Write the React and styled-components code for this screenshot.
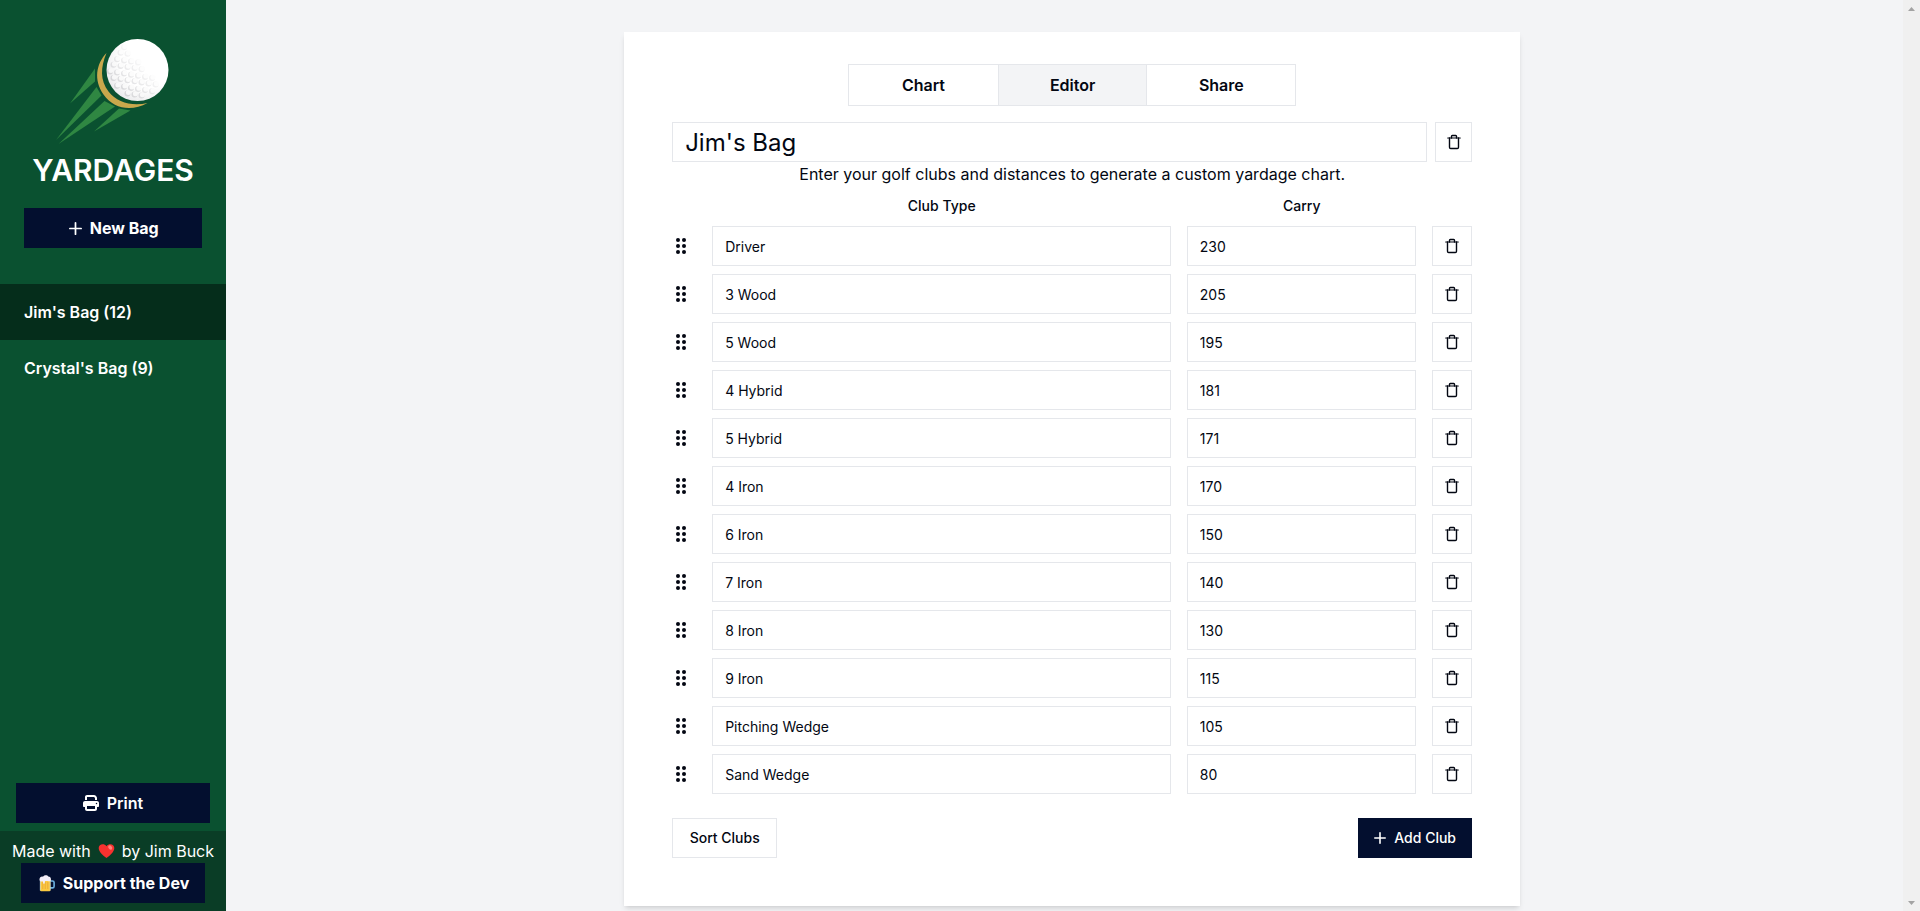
import React from "react";
import styled, { createGlobalStyle } from "styled-components";
import { FaPrint } from "react-icons/fa6";

const Global = createGlobalStyle`
  *, *::before, *::after { box-sizing: border-box; }
  body { margin: 0; font-family: Inter, "Liberation Sans", sans-serif; font-size: 16px; line-height: 24px; color: #030712; background: #f3f4f6; overflow: hidden; }
  button, input { font: inherit; color: inherit; margin: 0; border-radius: 0; }
  svg { display: block; flex: none; }
  h1, p { margin: 0; }
`;

const Page = styled.div`display: flex; height: 911px; overflow: hidden;`;

const Sidebar = styled.aside`
  width: 226px; flex: none; display: flex; flex-direction: column;
  background: #0a5130; color: #fff;
`;
const Logo = styled.svg`width: 130px; height: 120px; margin: 30px 0 0 50px;`;
const Brand = styled.h1`
  margin-top: 2px; text-align: center; font-size: 30px; line-height: 36px; font-weight: 600;
`;
const Button = styled.button`
  display: inline-flex; align-items: center; justify-content: center; gap: 8px; flex: none;
  height: 40px; padding: ${(p) => p.$pad || "0 16px"}; margin: ${(p) => p.$margin || 0};
  width: ${(p) => p.$width || "auto"};
  border: ${(p) => (p.$outline ? "1px solid #e5e7eb" : "0")};
  background: ${(p) => (p.$outline ? "#fff" : "#030f2f")};
  color: ${(p) => (p.$outline ? "#030712" : "#fff")};
  font-size: ${(p) => (p.$large ? 16 : 14)}px;
  font-weight: ${(p) => (p.$bold ? 700 : p.$large ? 600 : 500)};
  white-space: nowrap;
`;
const BagList = styled.nav`margin-top: 36px; flex: 1;`;
const BagItem = styled.div`
  height: 56px; padding: 16px 24px; font-weight: 600;
  background: ${(p) => (p.$active ? "#052d1b" : "transparent")};
`;
const Footer = styled.footer`
  height: 80px; padding-top: 8px; background: #0a3d26;
  display: flex; flex-direction: column; align-items: center;
`;
const Credit = styled.p`
  display: flex; align-items: center; white-space: pre; height: 24px;
  svg { margin: 0 2.5px; }
`;

const Main = styled.main`flex: 1; display: flex; align-items: flex-start; padding: 32px 0 0 398.16px;`;
const Card = styled.section`
  width: 896px; height: 874px; padding: 32px 48px 48px; background: #fff;
  box-shadow: 0 4px 6px -1px rgba(0,0,0,.1), 0 2px 4px -2px rgba(0,0,0,.1);
`;
const Tabs = styled.div`
  width: 448px; height: 42px; margin: 0 auto; display: grid; grid-template-columns: repeat(3, 1fr);
  border: 1px solid #e5e7eb;
`;
const Tab = styled.div`
  display: flex; align-items: center; justify-content: center; font-weight: 600;
  background: ${(p) => (p.$active ? "#f3f4f6" : "#fff")};
  & + & { border-left: 1px solid #e5e7eb; }
`;
const TitleRow = styled.div`display: flex; gap: 8px; margin-top: 16px;`;
const Input = styled.input`
  width: 100%; min-width: 0; height: 40px; padding: 0 12px;
  border: 1px solid #e5e7eb; background: #fff; outline: 0;
  font-size: ${(p) => (p.$title ? 24 : 14)}px;
`;
const Intro = styled.p`text-align: center;`;
const Grid = styled.div`
  display: grid; grid-template-columns: 24px 2fr 1fr 40px; column-gap: 16px; row-gap: 8px; align-items: center;
`;
const Head = styled.div`
  height: 24px; margin-top: 8px; padding-left: 0.5px; font-size: 14px; font-weight: 500; text-align: center;
`;
const Actions = styled.div`display: flex; justify-content: space-between; margin-top: 24px;`;

const Scrollbar = styled.div`
  width: 17px; flex: none; background: #f0f0f0; display: flex; flex-direction: column;
  justify-content: space-between; align-items: center; padding: 7px 0 6px;
`;

const clubs = [
  ["Driver", 230], ["3 Wood", 205], ["5 Wood", 195], ["4 Hybrid", 181], ["5 Hybrid", 171],
  ["4 Iron", 170], ["6 Iron", 150], ["7 Iron", 140], ["8 Iron", 130], ["9 Iron", 115],
  ["Pitching Wedge", 105], ["Sand Wedge", 80],
];

const Plus = ({ size }) => (
  <svg width={size} height={size} viewBox="0 0 12 12" stroke="currentColor" strokeWidth="1.6" strokeLinecap="round">
    <path d="M6 .8v10.400M.8 6h10.400" />
  </svg>
);
const Trash = () => (
  <svg width="14" height="16" viewBox="0 0 14 16" fill="none" stroke="currentColor" strokeLinecap="round">
    <path d="M.7 4h12.6" strokeWidth="1.1" />
    <path d="M4.500 4V2.300q0-.8.8-.8h3.400q.8 0 .8.8V4M2.500 4v9.300q0 1.200 1.200 1.200h6.600q1.200 0 1.200-1.200V4" strokeWidth="1.400" />
  </svg>
);
const Grip = () => (
  <svg width="24" height="24" viewBox="0 0 24 24" fill="#030712">
    {[6, 12, 18].map((y) => [6, 12].map((x) => <circle key={x + "-" + y} cx={x} cy={y} r="2" />))}
  </svg>
);
const Heart = () => (
  <svg width="17" height="16" viewBox="0 0 17 16">
    <path d="M8.5 15C5 12.6.7 8.9.7 5.1.7 1.2 5.8-.2 8.5 3.2 11.2-.2 16.3 1.2 16.3 5.1c0 3.8-4.3 7.5-7.8 9.9z" fill="#f8312f" />
    <ellipse cx="12.2" cy="4.5" rx="2.3" ry="1.7" fill="#ff8178" transform="rotate(45 12.2 4.5)" />
  </svg>
);
const Beer = () => (
  <svg width="16" height="17" viewBox="0 0 16 17">
    <path d="M11 6h2.500q1.600 0 1.600 1.600v3.600q0 1.700-1.600 1.700H11" fill="none" stroke="#6db3e2" strokeWidth="1.600" />
    <path d="M1 4h10.500v11q0 1.200-1.200 1.200H2.200Q1 16.200 1 15z" fill="#fbc93f" />
    <path d="M1.300 5v10.500M11.200 5v10.500" stroke="#b9d5e6" strokeWidth=".7" />
    <path d="M3.800 7v7M6.300 7v7M8.800 7v7" stroke="#eaa93c" strokeWidth=".9" />
    <path d="M.6 5.200C-.1 2.500 2.400.900 4 1.700 5.500-.2 8.500-.1 9.300 1.600c2 0 3.200 1.800 2.400 3.800-.6 1.300-2.200 1.100-3 .5H6l-.3 2.300q-.8 1-1.500 0L3.900 6.300C2.500 6.900 1 6.500.6 5.200z" fill="#f3eef8" />
  </svg>
);

const dimples = [];
for (let r = 0; r < 8; r++) {
  for (let c = 0; c < 8; c++) {
    const x = 60 + c * 7 + (r % 2) * 3.5;
    const y = 15 + r * 6.6 + c * 1.1;
    const d = Math.hypot(x - 87.5, y - 40);
    if (d < 28 && x - y < 58) dimples.push([x, y, Math.max(0.2, 1 - (x - y + 8) / 80)]);
  }
}

const LogoArt = () => (
  <Logo viewBox="0 0 130 120">
    <defs>
      <radialGradient id="ball" cx=".65" cy=".35" r=".75">
        <stop offset=".6" stopColor="#fff" />
        <stop offset="1" stopColor="#e8e8ea" />
      </radialGradient>
    </defs>
    <g fill="#2f8742">
      <path d="M45 38.500V51.500L20 73.500z" />
      <path d="M46.500 57L51.500 65.500 6 110z" />
      <path d="M54.500 71L65 76.500 8.500 114z" />
      <path d="M69 78.500L80.500 80.500 44 101.500z" />
    </g>
    <path d="M56.500 23C46 34 43.500 50 53.500 64.500 64 79.500 82 81.500 97.500 73 82 76.500 67 72.500 58.500 61.500 50 50.500 50.500 37 56.500 23z" fill="#c9a84c" />
    <circle cx="87.500" cy="40" r="31" fill="url(#ball)" />
    {dimples.map(([x, y, o], i) => (
      <g key={i} opacity={o}>
        <circle cx={x} cy={y} r="3" fill="#cdcdd0" />
        <circle cx={x + 0.9} cy={y - 0.8} r="2.500" fill="#fafafa" />
      </g>
    ))}
  </Logo>
);

export default function App() {
  return (
    <Page>
      <Global />
      <Sidebar>
        <LogoArt />
        <Brand>YARDAGES</Brand>
        <Button $large $bold $pad="0 16px 0 17.5px" $margin="20px 24px 0"><Plus size={13} />New Bag</Button>
        <BagList>
          <BagItem $active>Jim's Bag (12)</BagItem>
          <BagItem>Crystal's Bag (9)</BagItem>
        </BagList>
        <Button $large $margin="0 16px 8px"><FaPrint size={16} />Print</Button>
        <Footer>
          <Credit>Made with <Heart /> by Jim Buck</Credit>
          <Button $large $bold $pad="0 0 0 2px" $width="184px"><Beer />Support the Dev</Button>
        </Footer>
      </Sidebar>
      <Main>
        <Card>
          <Tabs><Tab>Chart</Tab><Tab $active>Editor</Tab><Tab>Share</Tab></Tabs>
          <TitleRow>
            <Input $title defaultValue="Jim's Bag" />
            <Button $outline $width="37px" $pad="0"><Trash /></Button>
          </TitleRow>
          <Intro>Enter your golf clubs and distances to generate a custom yardage chart.</Intro>
          <Grid>
            <span /><Head>Club Type</Head><Head>Carry</Head><span />
            {clubs.map(([name, carry]) => (
              <React.Fragment key={name}>
                <Grip />
                <Input defaultValue={name} />
                <Input defaultValue={carry} />
                <Button $outline $width="40px" $pad="0"><Trash /></Button>
              </React.Fragment>
            ))}
          </Grid>
          <Actions>
            <Button $outline $width="105px" $pad="0">Sort Clubs</Button>
            <Button $width="114px" $pad="0"><Plus size={12} />Add Club</Button>
          </Actions>
        </Card>
      </Main>
      <Scrollbar>
        <svg width="7" height="4" viewBox="0 0 7 4" fill="#a3a3a3"><path d="M3.500 0L7 4H0z" /></svg>
        <svg width="7" height="4" viewBox="0 0 7 4" fill="#a3a3a3"><path d="M3.500 4L7 0H0z" /></svg>
      </Scrollbar>
    </Page>
  );
}
